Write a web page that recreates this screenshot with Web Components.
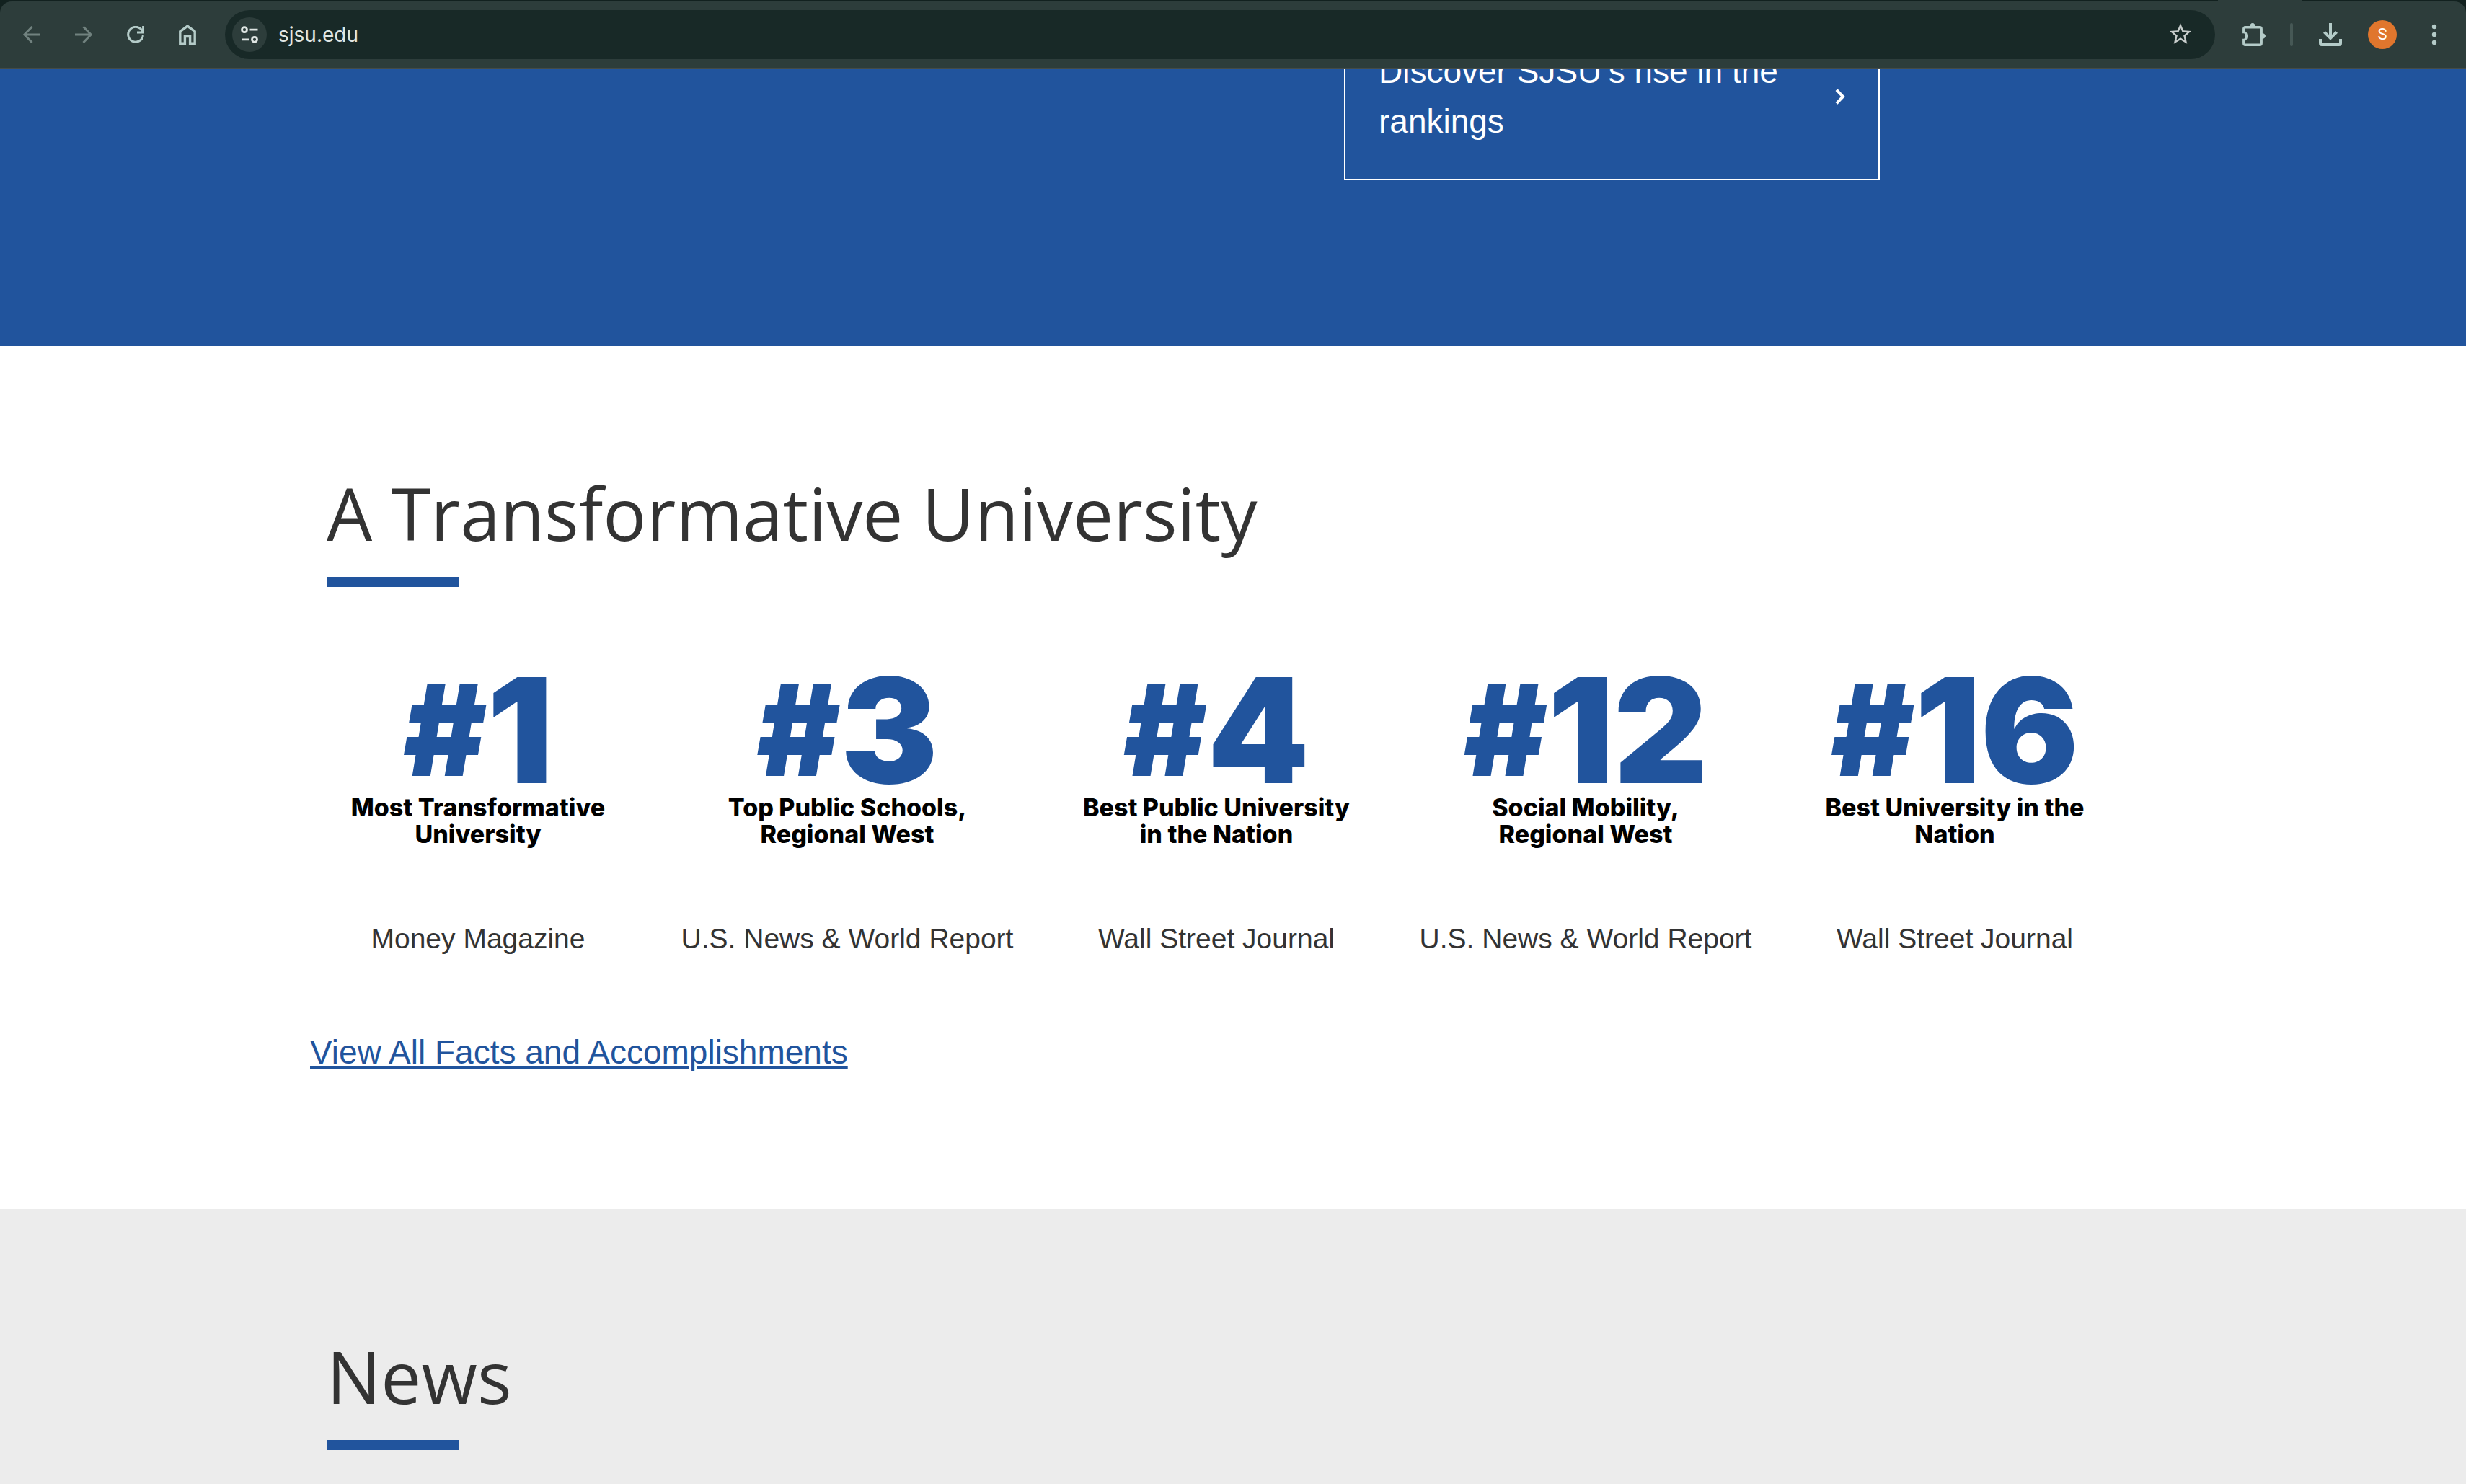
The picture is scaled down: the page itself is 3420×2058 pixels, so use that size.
<!DOCTYPE html>
<html lang="en">
<head>
<meta charset="utf-8">
<title>San José State University</title>
<style>
  html, body { height: 100%; margin: 0; }
  body {
    --blue: #21549d;
    --ink: #333333;
    font-family: "Liberation Sans", Arial, sans-serif;
    font-size: 46px;
    line-height: 69px;
    color: var(--ink);
    overflow: hidden;
  }
</style>
</head>
<body>
<browser-window>
  <browser-toolbar slot="toolbar" url="sjsu.edu" initial="S"></browser-toolbar>
  <hero-band>
    <promo-card href="#rankings">Discover SJSU’s rise in the rankings</promo-card>
  </hero-band>
  <page-section heading="A Transformative University">
    <stat-row>
      <rank-stat rank="1" source="Money Magazine">Most Transformative University</rank-stat>
      <rank-stat rank="3" source="U.S. News &amp; World Report">Top Public Schools, Regional West</rank-stat>
      <rank-stat rank="4" source="Wall Street Journal">Best Public University in the Nation</rank-stat>
      <rank-stat rank="12" source="U.S. News &amp; World Report">Social Mobility, Regional West</rank-stat>
      <rank-stat rank="16" source="Wall Street Journal">Best University in the Nation</rank-stat>
    </stat-row>
    <text-link href="#facts">View All Facts and Accomplishments</text-link>
  </page-section>
  <page-section heading="News" tone="grey"></page-section>
</browser-window>

<script>
const define = (name, render) => customElements.define(name, class extends HTMLElement {
  connectedCallback() {
    if (this.shadowRoot) return;
    this.attachShadow({ mode: 'open' }).innerHTML = render(this);
  }
});

const ICONS = {
  back: ['0 0 24 24', '<path d="M24 12H2M12.5 1 1.8 12 12.5 23" stroke-width="3"/>'],
  forward: ['0 0 24 24', '<path d="M0 12h22M11.5 1 22.2 12 11.5 23" stroke-width="3"/>'],
  reload: ['0 0 24 24', '<path d="M21.6 7.6A10.4 10.4 0 1 0 22.4 13M22.6 0v9H14" stroke-width="3"/>'],
  home: ['0 0 24 28', '<path d="M1.8 26.2V9.6L12 2.2l10.2 7.4v16.6h-6.6V16.6H8.4v9.6z" stroke-width="3.4"/>'],
  tune: ['0 0 24 24', '<circle cx="5" cy="5.2" r="3.5"/><path d="M12.5 5.2H23.5M1 18.8H12"/><circle cx="19" cy="18.8" r="3.5"/>', 2.8],
  star: ['0 .5 24 24', '<path fill="currentColor" stroke="none" d="M22 9.24l-7.19-.62L12 2 9.19 8.63 2 9.24l5.46 4.73L5.82 21 12 17.27 18.18 21l-1.63-7.03L22 9.24zM12 15.4l-3.76 2.27 1-4.28-3.32-2.88 4.38-.38L12 6.1l1.71 4.04 4.38.38-3.32 2.88 1 4.28L12 15.4z"/>'],
  puzzle: ['0 0 32 32', '<path d="M1.8 12.6V8a2 2 0 0 1 2-2.2H24a2.2 2.2 0 0 1 2.2 2.2v20a2.2 2.2 0 0 1-2.2 2.2H4a2.2 2.2 0 0 1-2.2-2.2v-4.6a3.6 5.4 0 0 0 0-10.8z" stroke-width="3.4"/><path fill="currentColor" stroke="none" d="M10 5a4 5 0 0 1 8 0zM27 14a5 4 0 0 1 0 8z"/>'],
  download: ['0 0 32 32', '<path d="M16 0v21M7.4 12.4 16 21l8.6-8.6M2 22v6a2 2 0 0 0 2 2h24a2 2 0 0 0 2-2v-6" stroke-width="4"/>'],
  menu: ['0 0 32 32', '<g fill="currentColor" stroke="none"><circle cx="16" cy="5" r="3.2"/><circle cx="16" cy="16" r="3.2"/><circle cx="16" cy="27" r="3.2"/></g>'],
  chevron: ['0 0 14 22', '<path d="M2 1.6 11 11 2 20.4" stroke-width="4"/>']
};
define('ui-icon', el => {
  const [box, body, sw = 3] = ICONS[el.getAttribute('name')];
  return `<style>:host{display:block;flex:none}svg{display:block;width:100%;height:100%}</style>
    <svg viewBox="${box}" fill="none" stroke="currentColor" stroke-width="${sw}" aria-hidden="true">${body}</svg>`;
});

define('browser-window', () => `
  <style>
    :host { display: flex; flex-direction: column; height: 100%; }
    main { flex: 1; min-height: 0; overflow: hidden; display: flex; flex-direction: column; }
    ::slotted(*) { flex: none; }
    ::slotted(:last-child) { flex: 1 0 auto; }
  </style>
  <slot name="toolbar"></slot>
  <main><slot></slot></main>`);

define('browser-toolbar', el => `
  <style>
    :host { display: block; flex: none; background: #12211f; color: #b4cbc8; --bar: #2d3d3b; }
    .strip { display: flex; justify-content: flex-end; height: 2px; padding-right: 228px; }
    .tab { width: 116px; background: var(--bar); }
    .bar {
      display: flex; align-items: center; box-sizing: border-box; height: 94px; padding: 0 8px;
      background: var(--bar); border-bottom: 2px solid #444b47; border-radius: 16px 16px 0 0;
    }
    button {
      display: flex; align-items: center; justify-content: center; flex: none;
      width: 72px; height: 68px; padding: 0; border: 0; background: none; color: inherit;
    }
    button:disabled { color: #71827f; }
    .i24 { width: 24px; height: 24px; }
    .i28 { width: 24px; height: 28px; }
    .i32 { width: 32px; height: 32px; }
    .i36 { width: 36px; height: 36px; color: #c7cccb; }
    form {
      display: flex; align-items: center; flex: 1; box-sizing: border-box; height: 68px;
      margin: 0 18px 0 16px; padding: 0 12px 0 10px; border-radius: 34px; background: #182927; color: #e0e6e4;
    }
    form .info { width: 48px; height: 48px; border-radius: 50%; background: #2d3d3b; }
    input {
      flex: 1; min-width: 0; height: 48px; padding: 0 0 0 16px; border: 0; outline: 0;
      background: none; color: inherit; font: 28px Inter, sans-serif;
    }
    .rule { flex: none; width: 4px; height: 32px; margin: 0 16px 0 14px; border-radius: 2px; background: #465855; }
    .avatar {
      display: flex; align-items: center; justify-content: center; width: 40px; height: 40px;
      border-radius: 50%; background: #e0762d; color: #fff; font: 22px/40px Roboto, sans-serif;
    }
  </style>
  <div class="strip"><div class="tab"></div></div>
  <div class="bar">
    <button aria-label="Back" disabled><ui-icon class="i24" name="back"></ui-icon></button>
    <button aria-label="Forward" disabled><ui-icon class="i24" name="forward"></ui-icon></button>
    <button aria-label="Reload"><ui-icon class="i24" name="reload"></ui-icon></button>
    <button aria-label="Home"><ui-icon class="i28" name="home"></ui-icon></button>
    <form>
      <button class="info" type="button" aria-label="View site information"><ui-icon class="i24" name="tune"></ui-icon></button>
      <input type="text" aria-label="Address" value="${el.getAttribute('url')}">
      <button type="button" aria-label="Bookmark"><ui-icon class="i36" name="star"></ui-icon></button>
    </form>
    <button aria-label="Extensions"><ui-icon class="i32" name="puzzle"></ui-icon></button>
    <span class="rule"></span>
    <button aria-label="Downloads"><ui-icon class="i32" name="download"></ui-icon></button>
    <button aria-label="Profile"><span class="avatar">${el.getAttribute('initial')}</span></button>
    <button aria-label="Menu"><ui-icon class="i32" name="menu"></ui-icon></button>
  </div>`);

define('hero-band', () => `
  <style>
    :host {
      display: flex; align-items: flex-end; justify-content: center; box-sizing: border-box;
      height: 384px; padding-bottom: 230px; background: var(--blue); overflow: hidden;
    }
    .inner { display: flex; justify-content: flex-end; box-sizing: border-box; width: 2560px; max-width: 100%; padding-right: 383px; }
  </style>
  <div class="inner"><slot></slot></div>`);

define('promo-card', el => `
  <style>
    :host { display: block; width: 743px; }
    a {
      display: flex; align-items: center; gap: 24px; box-sizing: border-box;
      padding: 45px 46px; border: 2px solid #fff; color: #fff; text-decoration: none;
    }
    span { flex: 1; }
    ui-icon { width: 14px; height: 22px; }
  </style>
  <a href="${el.getAttribute('href')}"><span><slot></slot></span><ui-icon name="chevron"></ui-icon></a>`);

define('page-section', el => `
  <style>
    :host { display: block; padding: 171px 0 183px; background: #fff; }
    :host([tone="grey"]) { background: #ececec; }
    .inner { width: 2560px; max-width: 100%; margin: 0 auto; }
    header { padding-left: 23px; }
    h2 { margin: 0; font: 400 100px/120px "Open Sans", sans-serif; }
    h2::after { content: ""; display: block; width: 184px; height: 14px; margin-top: 29px; background: var(--blue); }
  </style>
  <section class="inner">
    <header><h2>${el.getAttribute('heading')}</h2></header>
    <slot></slot>
  </section>`);

define('stat-row', () => `
  <style>
    :host { display: grid; grid-template-columns: repeat(5, 1fr); margin: 119px 23px 94px -23px; }
  </style>
  <slot></slot>`);

define('rank-stat', el => `
  <style>
    :host { display: block; text-align: center; }
    figure { margin: 0; }
    .rank { margin: 0; font: 900 202px/160px Inter, sans-serif; color: var(--blue); }
    .hash { font-size: 176px; line-height: 0; vertical-align: 10px; }
    figcaption { margin-top: 8px; padding: 0 68px; font: 800 34px/37px Inter, sans-serif; color: #000; }
    .source { margin: 98px 0 0; font-size: 39px; line-height: 58px; }
  </style>
  <figure>
    <p class="rank"><span class="hash">#</span>${el.getAttribute('rank')}</p>
    <figcaption><slot></slot></figcaption>
  </figure>
  <p class="source">${el.getAttribute('source').replace('&', '&amp;')}</p>`);

define('text-link', el => `
  <style>
    :host { display: block; }
    a { color: var(--blue); text-decoration-thickness: 4px; text-underline-offset: 3px; }
  </style>
  <a href="${el.getAttribute('href')}"><slot></slot></a>`);
</script>
</body>
</html>
